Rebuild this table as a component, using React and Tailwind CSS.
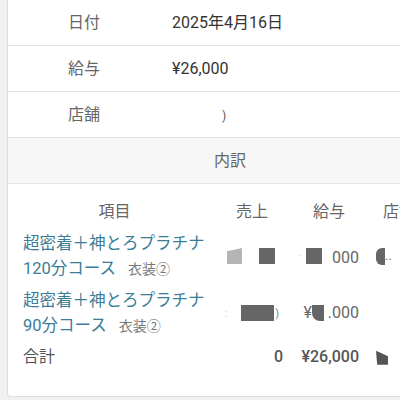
import React from "react";

const font = { fontFamily: 'Roboto, "Noto Sans CJK JP", "Noto Sans", sans-serif' };

function InfoRow({ label, children }) {
  return (
    <div className="flex h-[46px] items-center border-b border-[#e4e4e4]">
      <div className="w-[152px] text-center text-[16px] text-[#666]">{label}</div>
      <div className="pl-3 text-[16px] text-[#333]">{children}</div>
    </div>
  );
}

function Box({ className }) {
  return <span className={"inline-block align-middle " + className} />;
}

export default function App() {
  return (
    <div className="min-h-[400px] w-[400px] overflow-hidden bg-[#f1f1f1]" style={font}>
      <div className="ml-[7px] h-[397px] w-[446px] rounded-b-[4px] border border-t-0 border-[#dedede] bg-white">
        <InfoRow label="日付">2025年4月16日</InfoRow>
        <InfoRow label="給与">¥26,000</InfoRow>
        <InfoRow label="店舗">
          <span className="ml-[50px] text-[12px] text-[#555]">)</span>
        </InfoRow>
        <div className="flex h-[46px] items-center justify-center border-b border-[#e4e4e4] bg-[#f7f7f7] text-[16px] text-[#666]">
          内訳
        </div>

        <div className="pt-[15px]">
          {/* header */}
          <div className="flex h-[26px] items-center text-[16px] text-[#666]">
            <div className="w-[213px] text-center">項目</div>
            <div className="w-[70px] pr-2 text-center">売上</div>
            <div className="w-[76px] text-center">給与</div>
            <div className="pl-[16px]">店舗</div>
          </div>

          {/* row 1 */}
          <div className="mt-[6px] flex h-[50px] items-center">
            <div className="w-[213px] pl-[15px] text-[16.5px] leading-[25px] text-[#3a7d97]">
              <div>超密着＋神とろプラチナ</div>
              <div>
                120分コース<span className="ml-3 text-[14px] text-[#777]">衣装②</span>
              </div>
            </div>
            <div className="flex w-[70px] items-center justify-end gap-[17px] pr-[16px]">
              <Box className="h-[16px] w-[15px] bg-[#b5b5b5] [clip-path:polygon(0_20%,100%_0,100%_100%,0_100%)]" />
              <Box className="h-[16px] w-[16px] bg-[#666]" />
            </div>
            <div className="flex w-[76px] items-center justify-end pr-2 text-[16px] text-[#666]">
              <span className="mr-[4px] text-[10px] text-[#ccc]">·</span>
              <Box className="h-[16px] w-[16px] bg-[#666]" />
              <span className="ml-[10px] mt-[4px]">000</span>
            </div>
            <div className="flex items-center pl-[9px] text-[13px] text-[#777]">
              <Box className="h-[17px] w-[9px] rounded-l-[6px] bg-[#666]" />
              <span>..</span>
            </div>
          </div>

          {/* row 2 */}
          <div className="mt-[7px] flex h-[50px] items-center">
            <div className="w-[213px] pl-[15px] text-[16.5px] leading-[25px] text-[#3a7d97]">
              <div>超密着＋神とろプラチナ</div>
              <div>
                90分コース<span className="ml-3 text-[14px] text-[#777]">衣装②</span>
              </div>
            </div>
            <div className="flex w-[70px] items-center justify-end pr-[12px]">
              <span className="mr-[13px] text-[10px] text-[#ccc]">:</span>
              <Box className="h-[16px] w-[33px] bg-[#666]" />
              <span className="ml-[2px] text-[10px] text-[#777]">)</span>
            </div>
            <div className="flex w-[76px] items-center justify-end pr-2 text-[16px] text-[#666]">
              <span>¥</span>
              <Box className="h-[16px] w-[12px] rounded-bl-[8px] bg-[#666]" />
              <span className="ml-[4px]">.000</span>
            </div>
            <div className="pl-[9px]" />
          </div>

          {/* total */}
          <div className="mt-[6px] flex h-[26px] items-center text-[16px] font-medium text-[#555]">
            <div className="w-[213px] pl-[15px] font-normal text-[#555]">合計</div>
            <div className="w-[70px] pr-2 text-right">0</div>
            <div className="w-[76px] pr-2 text-right">¥26,000</div>
            <div className="pl-[9px]">
              <Box className="h-[14px] w-[12px] bg-[#555] [clip-path:polygon(0_0,100%_40%,100%_100%,10%_100%)]" />
            </div>
          </div>
        </div>
      </div>
    </div>
  );
}
